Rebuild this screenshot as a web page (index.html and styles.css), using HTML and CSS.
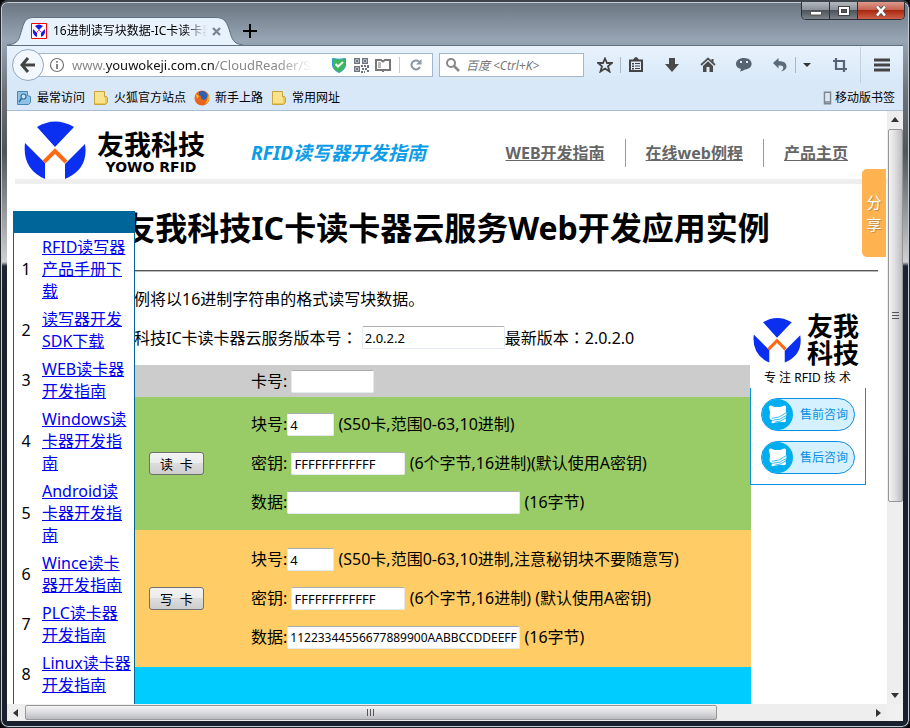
FILE: index.html
```html
<!DOCTYPE html>
<html lang="zh-CN">
<head>
  <meta charset="UTF-8">
  <meta name="viewport" content="width=device-width, initial-scale=1.0">
  <title>16进制读写块数据-IC卡读卡器</title>
  <link rel="stylesheet" href="styles.css">
</head>
<body>
  <!-- Shared shapes -->
  <svg class="defs" aria-hidden="true">
    <symbol id="logo" viewBox="0 0 62 58">
      <path fill="#0a2ff0" d="M13 6Q31-5 50 6L31 26ZM1 22L21 42V58Q-2 48 1 22ZM61 23L41 43V58Q65 48 61 23Z"/>
      <path fill="none" stroke="#ff6a10" stroke-width="4" d="M20 41L31 30L42 41"/>
    </symbol>
    <symbol id="folder" viewBox="0 0 16 16">
      <path fill="#e8c65c" stroke="#c9a53e" d="M1.500 1.500H11.500V6.500H13.500Q14.500 7 14.500 9V12.500L12.500 14.500H1.500Z"/>
      <path fill="#f8e28c" d="M2 2H11V7L12 8V13H2Z"/>
    </symbol>
    <symbol id="bird" viewBox="0 0 32 32">
      <circle cx="16" cy="16" r="16" fill="#00adef"/>
      <path fill="#fff" d="M7 9Q7 6 10 7Q13 9 16 8Q19 9 22 7Q25 6 25 9Q24 11 25 14Q26 17 24 20Q26 23 23 24Q19 23 16 24Q13 25 10 25Q9 24 11 22Q7 21 8 17Q9 13 7 9Z"/>
      <path fill="none" stroke="#00adef" stroke-width=".8" d="M10 20Q18 20 25 14M11 22Q19 22 25 17M13 24Q20 23 24 20"/>
    </symbol>
  </svg>

  <div class="window">
    <div class="titlebar">
      <div class="tab">
        <svg class="tab-shape" viewBox="0 0 236 28" preserveAspectRatio="none"><path fill="#e8f2fc" stroke="#5f6f82" d="M0 28C12 27 12 22 15 12C18 2 20 .5 28 .5H208C216 .5 219 3 222 12C225 22 226 27 236 28"/></svg>
        <svg class="favicon" viewBox="0 0 16 16"><path fill="#fff" stroke="red" d="M.5.5H15.500V15.500H.5Z"/><path fill="#1a1ae0" d="M4 3Q8 0 12 3L8 7ZM2 6L6 10V14Q1 12 2 6ZM14 6L10 10V14Q15 12 14 6Z"/><path fill="none" stroke="#e040c0" d="M5 10L8 7L11 10"/></svg>
        <span class="tab-title">16进制读写块数据-IC卡读卡器</span>
        <button class="tab-close" aria-label="关闭标签页"><svg width="9" height="9" viewBox="0 0 9 9"><path stroke="#7b8896" stroke-width="2.400" d="M1 1L8 8M8 1L1 8"/></svg></button>
      </div>
      <button class="tab-new" aria-label="新建标签页"><svg width="14" height="14" viewBox="0 0 14 14"><path stroke="#000" stroke-width="2" d="M7 0V14M0 7H14"/></svg></button>
      <div class="controls">
        <button class="control" aria-label="最小化"><svg width="14" height="10" viewBox="0 0 14 10"><path fill="#fff" stroke="#555" d="M1.500 5.500H12.500V9H1.500Z"/></svg></button>
        <button class="control" aria-label="最大化"><svg width="14" height="10" viewBox="0 0 14 10"><path fill="none" stroke="#444" stroke-width="4" d="M3 2H11V8H3Z"/><path fill="none" stroke="#fff" stroke-width="2" d="M3 2H11V8H3Z"/></svg></button>
        <button class="control control-close" aria-label="关闭"><svg width="12" height="10" viewBox="0 0 12 10"><path stroke="#555" stroke-width="4" d="M2 0L10 10M10 0L2 10"/><path stroke="#fff" stroke-width="2.500" d="M2 .5L10 9.500M10 .5L2 9.500"/></svg></button>
      </div>
    </div>

    <div class="toolbar">
      <div class="nav">
        <button class="back" aria-label="后退"><svg width="16" height="16" viewBox="0 0 16 16"><path fill="none" stroke="#444" stroke-width="3" d="M8 1L2 8L8 15M2 8H15"/></svg></button>
        <div class="urlbar">
          <svg width="16" height="16" viewBox="0 0 16 16"><circle cx="8" cy="8" r="6.500" fill="none" stroke="#777" stroke-width="1.200"/><path stroke="#777" stroke-width="1.800" d="M8 7V12M8 4V5.800"/></svg>
          <span class="url">www.<b>youwokeji.com.cn</b>/CloudReader/Sample</span>
          <svg width="16" height="16" viewBox="0 0 16 16"><path fill="#3cb85a" stroke="#2e9cc4" d="M1.500 1.500Q8 3 14.500 1.500V8Q14 13 8 15.500Q2 13 1.500 8Z"/><path fill="none" stroke="#fff" stroke-width="2" d="M4.500 7L7 9.500L12 5"/></svg>
          <svg class="gap-qr" width="16" height="16" viewBox="0 0 16 16"><path fill="none" stroke="#6b7480" stroke-width="1.400" d="M1.700 1.700H6.300V6.300H1.700ZM9.700 1.700H14.300V6.300H9.700ZM1.700 9.700H6.300V14.300H1.700Z"/><path fill="#6b7480" d="M3 3H5V5H3ZM11 3H13V5H11ZM3 11H5V13H3ZM8 8H10V10H8ZM11 8H13V10H11ZM14 8H16V11H14ZM9 11H11V13H9ZM12 11H14V13H12ZM8 14H10V16H8ZM11 14H12V16H11ZM14 13H16V15H14Z"/></svg>
          <svg width="16" height="16" viewBox="0 0 16 16"><path fill="none" stroke="#777" stroke-width="2" d="M7 13H1V3H6L8 4.500L10 3H15V13H9M8 12V15"/><path stroke="#777" stroke-width="1.200" d="M3 6H6M3 8H6M3 10H6"/></svg>
          <span class="url-sep"></span>
          <button class="reload" aria-label="刷新"><svg width="12" height="12" viewBox="0 0 12 12"><path fill="none" stroke="#8a97a5" stroke-width="2" d="M9 2.500A4.500 4.500 0 1 0 10 8"/><path fill="#8a97a5" d="M11.500 0V5.500H6Z"/></svg></button>
        </div>
        <div class="search">
          <svg width="14" height="14" viewBox="0 0 14 14"><circle cx="5" cy="5" r="4" fill="none" stroke="#888" stroke-width="2"/><path stroke="#888" stroke-width="2.500" d="M8 8L13 13"/></svg>
          <input type="text" aria-label="搜索" placeholder="百度 &lt;Ctrl+K&gt;">
        </div>
        <div class="tools">
          <button aria-label="收藏"><svg viewBox="0 0 16 16"><path fill="none" stroke="#444" stroke-width="1.800" d="M8 1.500L10 6H15L11 9.300L12.500 14.500L8 11.500L3.500 14.500L5 9.300L1 6H6Z"/></svg></button>
          <span class="sep"></span>
          <button aria-label="书签"><svg viewBox="0 0 16 16"><path fill="none" stroke="#444" stroke-width="2" d="M2 3.500H14V14H2Z"/><path fill="#444" d="M5 3Q8-3 11 3ZM4 6H6V7.500H4ZM7 6H12V7H7ZM4 8.500H6V10H4ZM7 8.500H12V9.500H7ZM4 11H6V12.500H4ZM7 11H12V12H7Z"/></svg></button>
          <button aria-label="下载"><svg viewBox="0 0 16 16"><path fill="#4a4a4a" d="M5 1H11V7H15L8 15L1 7H5Z"/></svg></button>
          <button aria-label="主页"><svg viewBox="0 0 16 16"><path fill="none" stroke="#555" stroke-width="1.800" d="M1 8L8 1.500L15 8"/><path fill="#4a4a4a" d="M3 9L8 4.200L13 9V15H9.500V10H6.500V15H3ZM11.500 2H13.500V6L11.500 4Z"/></svg></button>
          <button aria-label="聊天"><svg viewBox="0 0 16 16"><path fill="#566370" d="M8 1C18 1 18 12 9 12.500Q7 14 4 14.500L5 12C-3 10 -1 1 8 1Z"/><path fill="#dbe8f6" d="M4 4H6V6H4ZM10 4H12V6H10Z"/></svg></button>
          <button aria-label="撤销"><svg viewBox="0 0 16 16"><path fill="#5c6b7b" d="M6.500 1V4Q15 4 14.500 10Q14 13 9 14.500Q12 12 11 9.500Q10 8 6.500 8.500V11.500L1 6Z"/></svg></button>
          <span class="sep"></span>
          <button class="caret" aria-label="更多"><svg viewBox="0 0 8 16"><path fill="#333" d="M0 6H8L4 10Z"/></svg></button>
          <button class="crop" aria-label="截图"><svg viewBox="0 0 16 16"><path fill="none" stroke="#566678" stroke-width="2.200" d="M1 4H12V15M4 1V12H15"/></svg></button>
          <span class="sep sep-tall"></span>
          <button aria-label="菜单"><svg viewBox="0 0 16 16"><path stroke="#444" stroke-width="3" d="M0 3H16M0 8H16M0 13H16"/></svg></button>
        </div>
      </div>
      <div class="bookmarks">
        <a href="#"><svg viewBox="0 0 16 16"><path fill="#8fc3e6" stroke="#4a88b4" d="M1.500 1.500H11.500V5.500L14.500 6.500V12.500L12.500 14.500H1.500Z"/><circle cx="7.500" cy="6.500" r="2.500" fill="#c8e4f6" stroke="#2f6d9c" stroke-width="1.200"/><path stroke="#2f6d9c" stroke-width="1.600" d="M5.500 8.500L3 12"/></svg>最常访问</a>
        <a href="#"><svg><use href="#folder"/></svg>火狐官方站点</a>
        <a href="#"><svg viewBox="0 0 16 16"><circle cx="8" cy="8" r="7.500" fill="#e8641b"/><path fill="#2a63b0" d="M5 2Q10-1 13 4Q14 9 10 10Q6 9 7 6Q4 6 5 2Z"/><path fill="#ffbe2e" d="M14 4Q17 11 11 14Q14 10 14 4ZM2 4L5 6L3 9Z"/></svg>新手上路</a>
        <a href="#"><svg><use href="#folder"/></svg>常用网址</a>
        <a href="#" class="mobile"><svg viewBox="0 0 9 16"><path fill="#dce6f0" stroke="#7c8792" stroke-width="1.600" d="M1 1.500H8V14.500H1ZM1 12.500H8"/></svg>移动版书签</a>
      </div>
    </div>

    <div class="content">
      <div class="viewport">
        <header class="site-header">
          <svg class="logo"><use href="#logo"/></svg>
          <div class="brand">
            <span class="brand-cn">友我科技</span>
            <span class="brand-en">YOWO RFID</span>
          </div>
          <span class="slogan">RFID读写器开发指南</span>
          <nav class="site-nav">
            <a href="#">WEB开发指南</a>
            <a href="#">在线web例程</a>
            <a href="#">产品主页</a>
          </nav>
        </header>

        <main>
          <h1>友我科技IC卡读卡器云服务Web开发应用实例</h1>
          <hr>
          <div class="demo">
            <p class="intro">本示例将以16进制字符串的格式读写块数据。</p>
            <p><label for="version">友我科技IC卡读卡器云服务版本号<span class="colon" lang="zh-TW">：</span></label> <input type="text" class="w-version" id="version" value="2.0.2.2">最新版本<span class="colon" lang="zh-TW">：</span>2.0.2.0</p>
            <form>
              <div class="row row-card">
                <div class="fields"><p><label for="card">卡号:</label> <input type="text" class="w-card" id="card"></p></div>
              </div>
              <div class="row row-read">
                <button type="button">读&nbsp; 卡</button>
                <div class="fields">
                  <p><label for="readBlock">块号:</label><input type="text" class="w-block" id="readBlock" value="4"> (S50卡,范围0-63,10进制)</p>
                  <p><label for="readKey">密钥:</label> <input type="text" class="w-key" id="readKey" value="FFFFFFFFFFFF"> (6个字节,16进制)(默认使用A密钥)</p>
                  <p><label for="readData">数据:</label><input type="text" class="w-data" id="readData"> (16字节)</p>
                </div>
              </div>
              <div class="row row-write">
                <button type="button">写&nbsp; 卡</button>
                <div class="fields">
                  <p><label for="writeBlock">块号:</label><input type="text" class="w-block" id="writeBlock" value="4"> (S50卡,范围0-63,10进制,注意秘钥块不要随意写)</p>
                  <p><label for="writeKey">密钥:</label> <input type="text" class="w-key" id="writeKey" value="FFFFFFFFFFFF"> (6个字节,16进制) (默认使用A密钥)</p>
                  <p><label for="writeData">数据:</label><input type="text" class="w-data" id="writeData" value="11223344556677889900AABBCCDDEEFF"> (16字节)</p>
                </div>
              </div>
              <div class="row row-result"></div>
            </form>
          </div>
        </main>

        <!-- Floating menu -->
        <aside class="menu">
          <table>
            <tr><td>1</td><td><a href="#">RFID读写器产品手册下载</a></td></tr>
            <tr><td>2</td><td><a href="#">读写器开发SDK下载</a></td></tr>
            <tr><td>3</td><td><a href="#">WEB读卡器开发指南</a></td></tr>
            <tr><td>4</td><td><a href="#">Windows读卡器开发指南</a></td></tr>
            <tr><td>5</td><td><a href="#">Android读卡器开发指南</a></td></tr>
            <tr><td>6</td><td><a href="#">Wince读卡器开发指南</a></td></tr>
            <tr><td>7</td><td><a href="#">PLC读卡器开发指南</a></td></tr>
            <tr><td>8</td><td><a href="#">Linux读卡器开发指南</a></td></tr>
          </table>
        </aside>

        <!-- Floating contact box -->
        <aside class="contact">
          <div class="contact-head">
            <svg class="contact-logo"><use href="#logo"/></svg>
            <strong>友我<br>科技</strong>
            <span>专 注 RFID 技 术</span>
          </div>
          <div class="contact-body">
            <a href="#"><svg><use href="#bird"/></svg>售前咨询</a>
            <a href="#"><svg><use href="#bird"/></svg>售后咨询</a>
          </div>
        </aside>

        <button class="share">分<br>享</button>
      </div>

      <div class="vscroll">
        <svg class="arrow" viewBox="0 0 8 5"><path fill="#333" d="M0 5L4 0L8 5Z"/></svg>
        <div class="track"><div class="thumb"></div></div>
        <svg class="arrow" viewBox="0 0 8 5"><path fill="#333" d="M0 0H8L4 5Z"/></svg>
      </div>
      <div class="hscroll">
        <svg class="arrow" viewBox="0 0 5 8"><path fill="#333" d="M5 0V8L0 4Z"/></svg>
        <div class="track"><div class="thumb"></div></div>
        <svg class="arrow" viewBox="0 0 5 8"><path fill="#333" d="M0 0L5 4L0 8Z"/></svg>
      </div>
      <div class="corner"></div>
    </div>
  </div>
</body>
</html>
```

FILE: styles.css
```css
* {
  box-sizing: border-box;
}
body {
  margin: 0;
  background: #05070a;
  color: #000;
  font-family: "Noto Sans", "Noto Sans CJK SC", sans-serif;
  font-size: 16px;
  line-height: 22px;
}
button {
  padding: 0;
  border: 0;
  background: none;
  font-family: inherit;
}
svg {
  display: block;
  flex: none;
}
.defs {
  position: absolute;
  width: 0;
  height: 0;
}

/* Window frame */
.window {
  display: flex;
  flex-direction: column;
  height: 100vh;
  padding: 0 5px 6px;
  border: 1px solid #20252c;
  border-top: 2px solid #3e434c;
  border-radius: 8px;
  box-shadow: inset 0 0 0 1px #c3ccd4;
  background: linear-gradient(#6b7581, #97a5b4 38px, #6f7378 90px, #50555c 150px, #cfd0d2 260px, #1b2430 264px, #18212c);
}
.titlebar {
  display: flex;
  align-items: flex-end;
  height: 43px;
  flex: none;
}
.tab {
  position: relative;
  display: flex;
  align-items: center;
  width: 236px;
  height: 28px;
  margin-left: 1px;
  padding: 0 14px 0 24px;
}
.tab-shape {
  position: absolute;
  inset: 0;
  width: 100%;
  height: 100%;
}
.favicon {
  position: relative;
  width: 16px;
  height: 16px;
}
.tab-title {
  position: relative;
  flex: 1;
  margin-left: 6px;
  overflow: hidden;
  white-space: nowrap;
  font-size: 12px;
  mask-image: linear-gradient(90deg, #000 85%, transparent);
}
.tab-close {
  position: relative;
  margin: 0 8px 0 5px;
}
.tab-new {
  margin: 0 0 7px;
}
.controls {
  display: flex;
  align-self: flex-start;
  height: 18px;
  margin: 0 -1px 0 auto;
  border: 1px solid #2b3038;
  border-top: 0;
  border-radius: 0 0 5px 5px;
  overflow: hidden;
}
.control {
  display: flex;
  align-items: center;
  justify-content: center;
  width: 28px;
  border-right: 1px solid #2b3038;
  background: linear-gradient(#b3b9bf, #8b9198 45%, #4e545c 50%, #7b8289);
}
.control-close {
  width: 46px;
  border-right: 0;
  background: linear-gradient(#dd9a8c, #c66350 45%, #a82810 50%, #d0604a);
}

/* Toolbars */
.toolbar {
  flex: none;
  margin: 0 1px;
  border-top: 1px solid #5f6f82;
  border-bottom: 1px solid #a9bdd4;
  background: linear-gradient(#e8f2fc, #d8e8f8 36px);
}
.nav {
  display: flex;
  align-items: center;
  height: 38px;
  padding: 0 13px 0 5px;
}
.back {
  position: relative;
  display: flex;
  align-items: center;
  justify-content: center;
  width: 32px;
  height: 32px;
  margin-right: -12px;
  border: 1px solid #92a8c0;
  border-radius: 50%;
  background: #f2f8fe;
}
.urlbar, .search {
  display: flex;
  align-items: center;
  height: 24px;
  border: 1px solid #a4b6ca;
  background: #fff;
}
.urlbar {
  flex: 401 1 0;
  min-width: 0;
  padding: 0 10px 0 16px;
}
.url {
  flex: 1;
  min-width: 0;
  margin: 0 18px 0 7px;
  overflow: hidden;
  white-space: nowrap;
  color: #888;
  font-size: 13px;
  mask-image: linear-gradient(90deg, #000 85%, transparent);
}
.url b {
  color: #111;
  font-weight: normal;
}
.gap-qr {
  margin: 0 6px;
}
.url-sep {
  width: 1px;
  height: 16px;
  margin: 0 10px 0 8px;
  background: #ccc;
}
.search {
  flex: 141 1 0;
  min-width: 0;
  margin-left: 6px;
  padding: 0 6px;
  gap: 6px;
}
.search input {
  flex: 1;
  width: 0;
  height: 20px;
  padding: 0;
  border: 0;
  border-radius: 0;
  font-family: inherit;
  font-size: 12px;
}
.search input::placeholder {
  color: #777;
  font-style: italic;
}
.tools {
  display: flex;
  align-items: center;
  margin-left: 13px;
}
.tools button {
  width: 16px;
  height: 16px;
  margin-right: 20px;
}
.tools button:first-child, .tools button:has(+ .sep) {
  margin-right: 7px;
}
.tools .crop:has(+ .sep) {
  margin-right: 12px;
}
.tools .caret {
  width: 8px;
  margin-right: 21px;
}
.tools button:last-child {
  margin-right: 0;
}
.sep {
  width: 1px;
  height: 16px;
  margin-right: 7px;
  background: #a9b7c6;
}
.sep-tall {
  height: 36px;
  margin-right: 13px;
  background: #c3d0de;
}
.bookmarks {
  display: flex;
  align-items: center;
  height: 26px;
  padding: 2px 8px 0 9px;
  gap: 8px;
}
.bookmarks a {
  display: flex;
  align-items: center;
  gap: 5px;
  color: #000;
  font-size: 12px;
  text-decoration: none;
}
.bookmarks svg {
  width: 16px;
  height: 16px;
}
.bookmarks .mobile {
  margin-left: auto;
  gap: 3px;
}
.bookmarks .mobile svg {
  width: 9px;
  height: 14px;
}

/* Page area and scrollbars */
.content {
  display: grid;
  flex: 1;
  min-height: 0;
  margin: 0 1px;
  grid-template: minmax(0, 1fr) 17px / minmax(0, 1fr) 16px;
}
.viewport {
  position: relative;
  overflow: hidden;
  background: #fff;
}
.vscroll, .hscroll {
  display: flex;
  align-items: center;
  justify-content: space-between;
  background: #eee;
}
.vscroll {
  flex-direction: column;
  padding: 6px 0;
}
.hscroll {
  padding: 0 6px;
}
.corner {
  background: #f0f0f0;
}
.arrow {
  width: 8px;
  height: 5px;
}
.hscroll .arrow {
  width: 5px;
  height: 8px;
}
.track {
  flex: 1;
  margin: 7px 0;
}
.hscroll .track {
  margin: 0 7px;
}
.thumb {
  width: 15px;
  height: 67%;
  border: 1px solid #979797;
  border-radius: 2px;
  background: repeating-linear-gradient(#555 0 1px, transparent 1px 3px) center / 7px 8px no-repeat, linear-gradient(90deg, #f4f4f4, #dcdcdf 50%, #bcbdc1);
}
.hscroll .thumb {
  width: 82%;
  height: 15px;
  background: repeating-linear-gradient(90deg, #555 0 1px, transparent 1px 3px) center / 8px 7px no-repeat, linear-gradient(#f4f4f4, #dcdcdf 50%, #bcbdc1);
}

/* Site header */
.site-header {
  display: flex;
  align-items: center;
  height: 73px;
  margin-left: 8px;
  padding: 10px 31px 0 9px;
  border-bottom: 5px solid #eee;
}
.logo {
  width: 62px;
  height: 58px;
}
.brand {
  display: flex;
  flex-direction: column;
  align-items: center;
  margin-left: 11px;
  padding-top: 6px;
  font-weight: bold;
}
.brand-cn {
  font-size: 27px;
  line-height: 28px;
}
.brand-en {
  font-family: "DejaVu Sans", sans-serif;
  font-size: 14px;
  line-height: 16px;
}
.slogan {
  margin-left: 46px;
  padding-top: 6px;
  color: #0c9ce8;
  font-size: 19px;
  font-style: italic;
  font-weight: bold;
  white-space: nowrap;
}
.site-nav {
  display: flex;
  margin-left: auto;
  padding-top: 6px;
}
.site-nav a {
  padding: 3px 20px;
  border-left: 1px solid #999;
  color: #666;
  font-weight: bold;
  white-space: nowrap;
}
.site-nav a:first-child {
  border-left: 0;
}
.site-nav a:last-child {
  padding-right: 8px;
}

/* Demo form */
main {
  margin: 0 9px 0 8px;
}
h1 {
  margin: 22px 0 20px;
  font-size: 32px;
  line-height: 44px;
  text-align: center;
  white-space: nowrap;
}
hr {
  height: 2px;
  margin: 0;
  border: 0;
  border-top: 1px solid #555;
  background: #bbb;
}
.demo {
  width: 649px;
  margin-left: 87px;
}
.demo p {
  height: 23px;
  margin: 16px 0;
  line-height: 23px;
  white-space: nowrap;
}
.demo .intro {
  height: 22px;
}
.colon {
  font-family: "Noto Sans CJK TC", sans-serif;
}
.demo input {
  height: 23px;
  padding: 1px 2px;
  border: 1px solid #e3e9ef;
  border-top-color: #abadb3;
  border-radius: 2px;
  background: #fff;
  font-family: inherit;
  font-size: 13px;
  vertical-align: top;
}
.demo .w-version {
  width: 143px;
}
.demo .w-card {
  width: 83px;
}
.demo .w-block {
  width: 47px;
}
.demo .w-key {
  width: 114px;
}
.demo .w-data {
  width: 233px;
  font-size: 12px;
}
.row {
  display: grid;
  grid-template-columns: 149px 1fr;
  align-items: center;
}
.row button {
  justify-self: center;
  width: 55px;
  height: 23px;
  border: 1px solid #707070;
  border-radius: 3px;
  background: linear-gradient(#f3f3f3, #ebebeb 50%, #dddddd 50%, #cdcdcd);
  font-size: 13px;
  line-height: 20px;
}
.fields {
  grid-column: 2;
}
.row-card {
  height: 32px;
  background: #ccc;
}
.row-card p {
  margin: 0;
}
.row-read {
  height: 133px;
  background: #9c6;
}
.row-write {
  height: 137px;
  background: #fc6;
}
.row-result {
  height: 133px;
  background: #0cf;
}

/* Floating menu */
.menu {
  position: absolute;
  top: 100px;
  bottom: 0;
  left: 6px;
  width: 122px;
  overflow: hidden;
  border: 1px solid #069;
  border-width: 22px 1px 0;
  background: #fff;
}
.menu table {
  width: 100%;
  border-collapse: collapse;
  table-layout: fixed;
}
.menu td {
  padding: 3px 2px 3px 4px;
}
.menu td:first-child {
  width: 24px;
  padding: 0;
  text-align: center;
}
.menu a {
  color: #00e;
}

/* Floating contact box */
.contact {
  position: absolute;
  top: 197px;
  right: 21px;
  width: 116px;
}
.contact-head {
  display: grid;
  grid-template-columns: 48px 1fr;
  align-items: center;
  column-gap: 6px;
  height: 80px;
  padding: 4px 4px 0 3px;
  background: #fff;
}
.contact-logo {
  width: 48px;
  height: 46px;
}
.contact-head strong {
  font-size: 26px;
  line-height: 27px;
}
.contact-head span {
  grid-column: 1 / 3;
  font-size: 12px;
  line-height: 20px;
  text-align: center;
}
.contact-body {
  display: flex;
  flex-direction: column;
  gap: 10px;
  padding: 10px;
  border: 1px solid #0a8fe0;
  border-top: 0;
  background: #fff;
}
.contact-body a {
  display: flex;
  align-items: center;
  gap: 7px;
  height: 33px;
  border: 1px solid #0a8fe0;
  border-radius: 17px;
  background: #d5f1ff;
  color: #0a8fe0;
  font-size: 12px;
  text-decoration: none;
  white-space: nowrap;
}
.contact-body svg {
  width: 31px;
  height: 31px;
}
.share {
  position: absolute;
  top: 58px;
  right: 1px;
  width: 24px;
  height: 88px;
  border-radius: 5px 0 0 5px;
  background: #ffb250;
  color: #fff;
  font-size: 15px;
  line-height: 22px;
  text-shadow: 1px 1px 1px #b98a50;
}
```
